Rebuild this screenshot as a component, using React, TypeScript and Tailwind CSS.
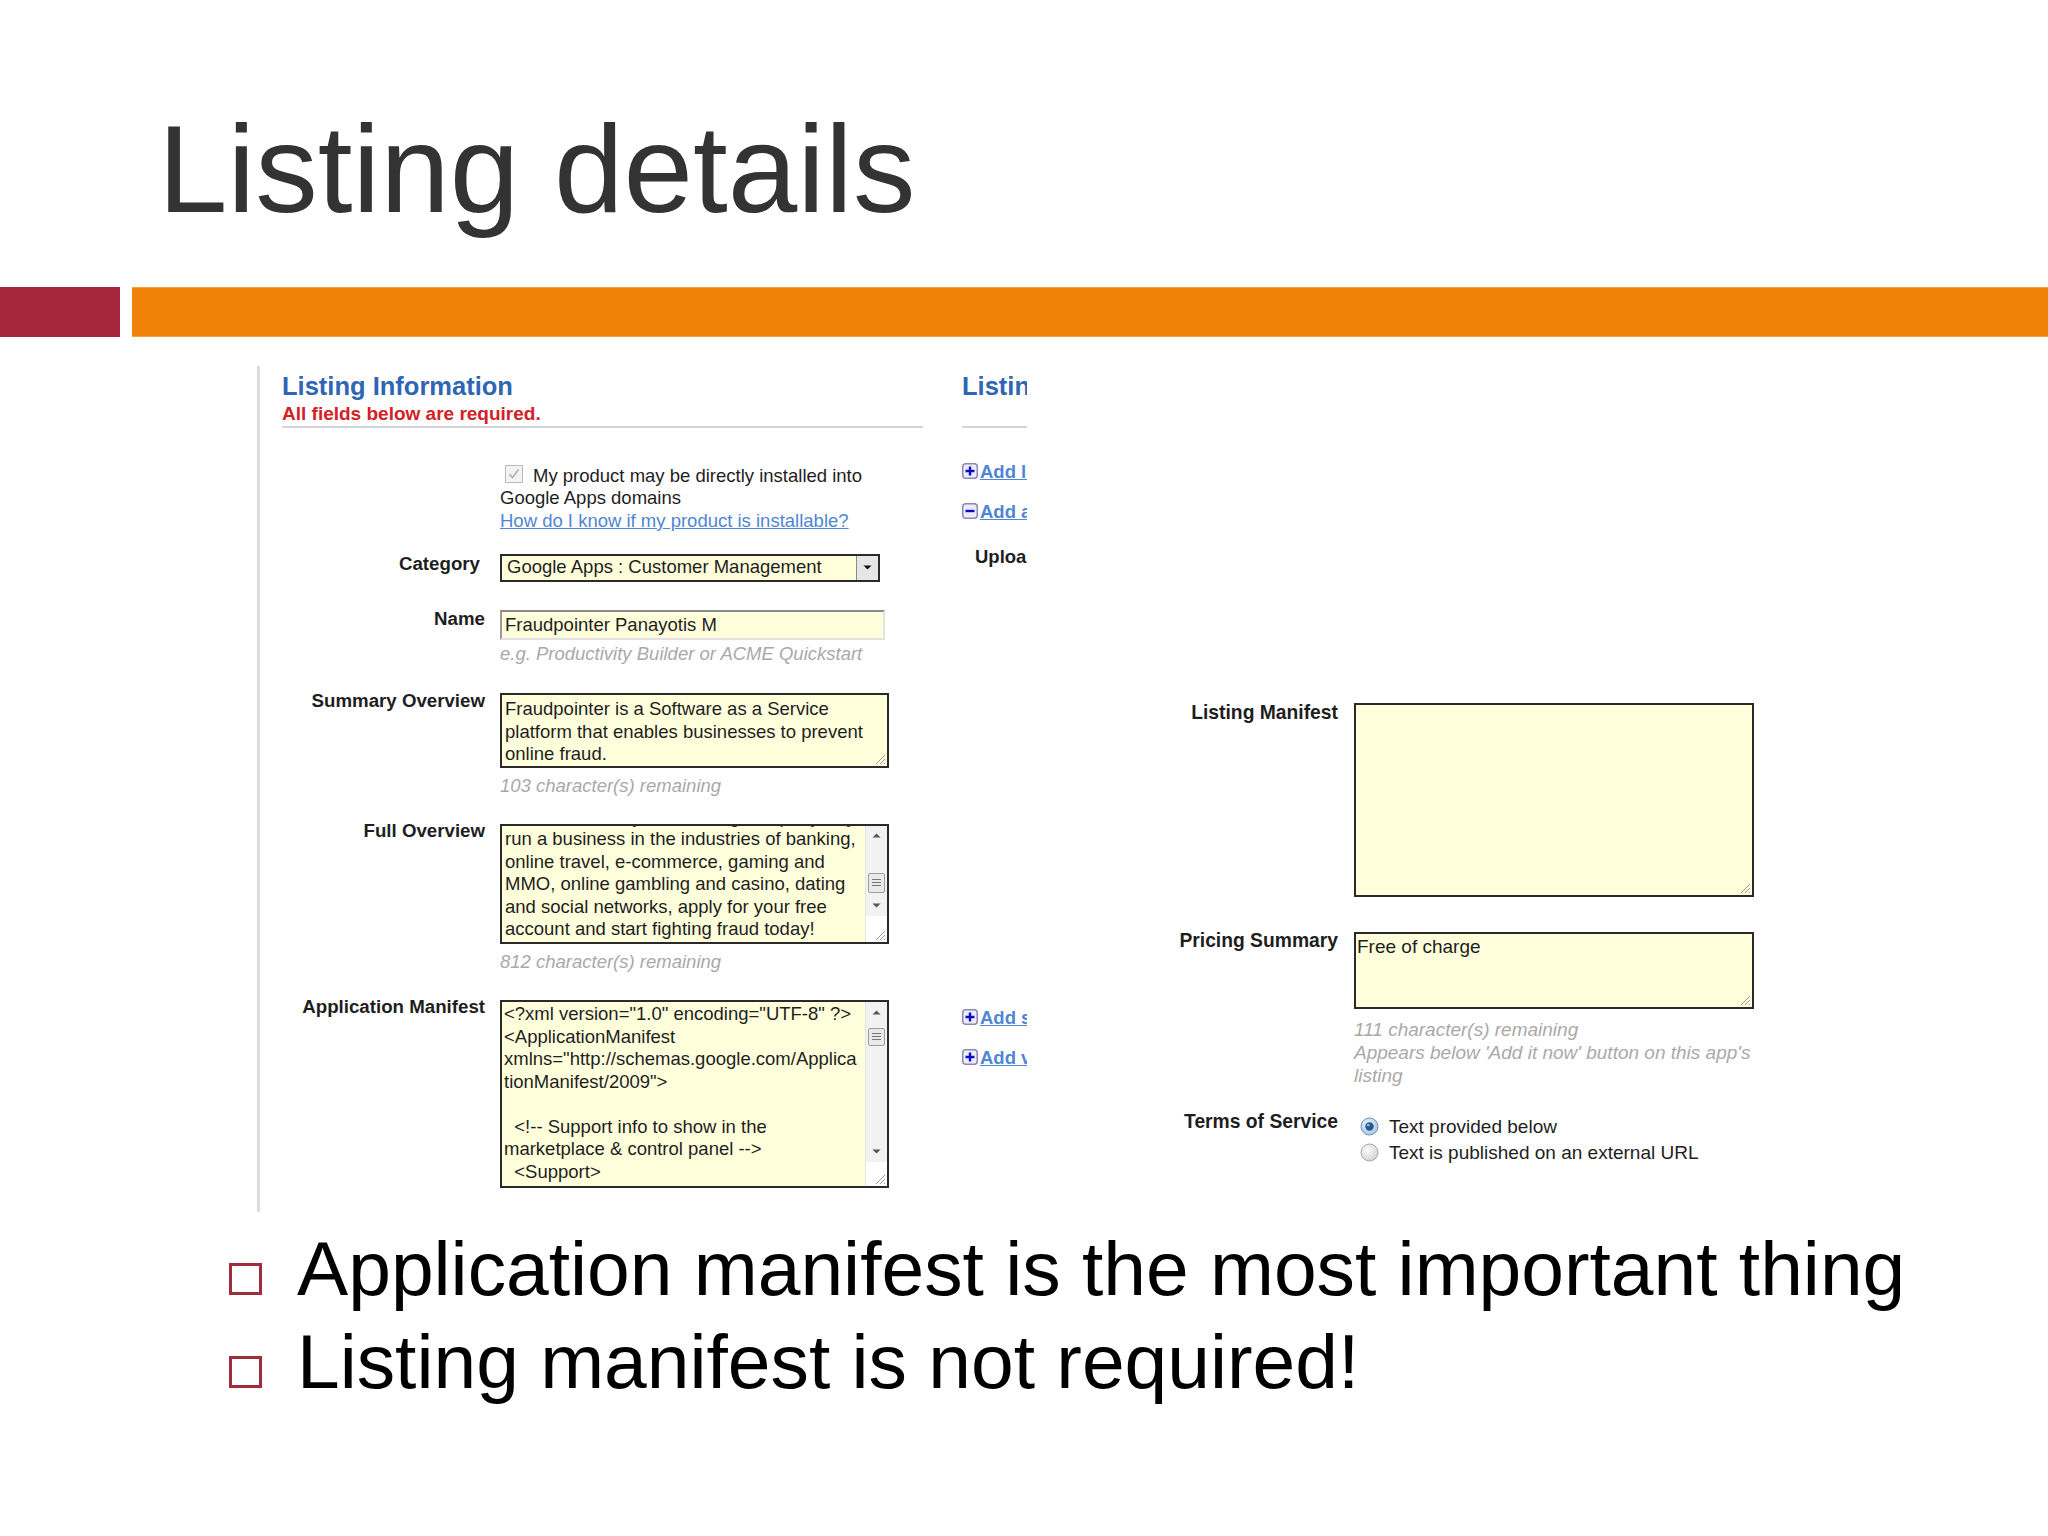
import React from "react";

const LINK = "text-[#4f86d4]";

function Grip() {
  return (
    <svg className="absolute bottom-[1px] right-[1px]" width="12" height="12" viewBox="0 0 12 12">
      <path d="M11 2L2 11M11 6L6 11M11 10L10 11" stroke="#9a9a9a" strokeWidth="1" />
    </svg>
  );
}

function Arrow({ up }: { up?: boolean }) {
  return (
    <svg width="9" height="5" viewBox="0 0 9 5">
      <path d={up ? "M0.5 4.5L4.5 0.5L8.5 4.5Z" : "M0.5 0.5L4.5 4.5L8.5 0.5Z"} fill="#555" />
    </svg>
  );
}

function Scrollbar({ upH, gap1, thumbH, gap2, downH, cornerH }: { upH: number; gap1: number; thumbH: number; gap2: number; downH: number; cornerH: number }) {
  return (
    <div className="flex w-[22px] shrink-0 flex-col border-l border-[#e4e4e4]">
      <div className="flex items-center justify-center bg-[#f2f2f2]" style={{ height: upH }}>
        <Arrow up />
      </div>
      <div className="bg-[#f2f2f2]" style={{ height: gap1 }} />
      <div className="flex items-center justify-center bg-[#f2f2f2] px-[2px]" style={{ height: thumbH }}>
        <div className="flex h-full w-full flex-col items-center justify-center gap-[2px] rounded-[2px] border border-[#9c9c9c] bg-[#e9e9e9]">
          <div className="h-[1px] w-[9px] bg-[#777]" />
          <div className="h-[1px] w-[9px] bg-[#777]" />
          <div className="h-[1px] w-[9px] bg-[#777]" />
        </div>
      </div>
      <div className="bg-[#f2f2f2]" style={{ height: gap2 }} />
      <div className="flex items-center justify-center bg-[#f2f2f2]" style={{ height: downH }}>
        <Arrow />
      </div>
      <div className="bg-white" style={{ height: cornerH }} />
    </div>
  );
}

function Label({ children, wide, extra }: { children: React.ReactNode; wide?: boolean; extra?: string }) {
  return (
    <div
      className={`${wide ? "w-[170px] text-[19.3px]" : "w-[203px] text-[18.7px]"} shrink-0 whitespace-nowrap text-right font-bold leading-[22.5px] text-[#1e1e1e] ${extra ?? ""}`}
    >
      {children}
    </div>
  );
}

function Hint({ children, extra }: { children: React.ReactNode; extra?: string }) {
  return <div className={`text-[18.5px] italic leading-[22.5px] text-[#a9a9a9] ${extra ?? ""}`}>{children}</div>;
}

function BoxIcon({ plus }: { plus?: boolean }) {
  return (
    <svg className="mt-[2.5px] mr-[2px] shrink-0" width="16" height="16" viewBox="0 0 16 16">
      <rect x="0.75" y="0.75" width="14.5" height="14.5" rx="3" fill="#ececf8" stroke="#8b88b8" strokeWidth="1.5" />
      <path d={plus ? "M8 3.5v9M3.5 8h9" : "M3.5 8h9"} stroke="#0a0ac8" strokeWidth="2.4" />
    </svg>
  );
}

function AddLink({ plus, text, extra }: { plus?: boolean; text: string; extra?: string }) {
  return (
    <div className={`flex items-start text-[18.5px] font-bold leading-[22.5px] ${extra ?? ""}`}>
      <BoxIcon plus={plus} />
      <span className={`${LINK} underline`}>{text}</span>
    </div>
  );
}

function Radio({ on }: { on?: boolean }) {
  return (
    <svg className="mt-[3.5px] ml-[6px] mr-[10px] shrink-0" width="19" height="19" viewBox="0 0 19 19">
      <defs>
        <radialGradient id={on ? "rOn" : "rOff"} cx="40%" cy="35%" r="70%">
          <stop offset="0%" stopColor={on ? "#e9f3fb" : "#fbfbfb"} />
          <stop offset="100%" stopColor={on ? "#a9c4dd" : "#d2d2d2"} />
        </radialGradient>
      </defs>
      <circle cx="9.5" cy="9.5" r="8.5" fill={`url(#${on ? "rOn" : "rOff"})`} stroke={on ? "#6f8fb3" : "#a6a6a6"} />
      {on && <circle cx="9.5" cy="9.5" r="4.2" fill="#1f5c94" />}
      {on && <circle cx="8.3" cy="8.2" r="1.4" fill="#7fb2df" />}
    </svg>
  );
}

const fullLines = [
  "fraud. Whether you are a big company or you simply",
  "run a business in the industries of banking,",
  "online travel, e-commerce, gaming and",
  "MMO, online gambling and casino, dating",
  "and social networks, apply for your free",
  "account and start fighting fraud today!",
];

const manifestLines = [
  '<?xml version="1.0" encoding="UTF-8" ?>',
  "<ApplicationManifest",
  'xmlns="http://schemas.google.com/Applica',
  'tionManifest/2009">',
  " ",
  "  <!-- Support info to show in the",
  "marketplace & control panel -->",
  "  <Support>",
];

function LeftColumn() {
  return (
    <div className="w-[641px] shrink-0 pt-[6px] text-[18.5px] leading-[22.5px] text-[#1e1e1e]">
      <div className="border-b-2 border-[#d4d4d4] pb-[1px]">
        <div className="text-[25.5px] font-bold leading-[28px] text-[#2f66b3]">Listing Information</div>
        <div className="mt-[2.5px] text-[19px] font-bold text-[#d42027]">All fields below are required.</div>
      </div>

      <div className="ml-[218px] mt-[36.5px]">
        <div className="flex items-start">
          <svg className="ml-[5px] mr-[10px] shrink-0" width="18" height="18" viewBox="0 0 18 18">
            <rect x="0.5" y="0.5" width="17" height="17" fill="#f3f3f3" stroke="#bcbcbc" />
            <path d="M4.5 9.5L7.5 12.5L13.5 4.5" fill="none" stroke="#b3b3b3" strokeWidth="1.8" />
          </svg>
          <span>My product may be directly installed into</span>
        </div>
        <div>Google Apps domains</div>
        <div className={`${LINK} underline`}>How do I know if my product is installable?</div>
      </div>

      <div className="mt-[21px] flex">
        <Label extra="pr-[5px]">Category</Label>
        <div className="ml-[15px] mt-[0.5px] flex h-[28px] w-[380px] border-2 border-[#2a2a2a] bg-[#ffffdc]">
          <div className="flex flex-1 items-center whitespace-nowrap pl-[5px]">Google Apps : Customer Management</div>
          <div className="flex w-[22px] items-center justify-center border-l border-[#8a8a8a] bg-[#e6e6e6]">
            <svg width="9" height="5" viewBox="0 0 9 5">
              <path d="M0.5 0.5L4.5 4.5L8.5 0.5Z" fill="#111" />
            </svg>
          </div>
        </div>
      </div>

      <div className="mt-[26.5px] flex">
        <Label>Name</Label>
        <div className="ml-[15px]">
          <div className="mt-[1.5px] h-[30px] w-[385px] border-2 border-t-[#8a8a8a] border-l-[#9a9a9a] border-r-[#e2e2e2] border-b-[#e2e2e2] bg-[#ffffdc] pl-[3px] pt-[2.5px]">
            Fraudpointer Panayotis M
          </div>
          <Hint extra="mt-[3.5px]">e.g. Productivity Builder or ACME Quickstart</Hint>
        </div>
      </div>

      <div className="mt-[24.5px] flex">
        <Label>Summary Overview</Label>
        <div className="ml-[15px]">
          <div className="relative mt-[2.5px] h-[75px] w-[389px] border-2 border-[#2a2a2a] bg-[#ffffdc] pl-[3px] pt-[3.5px]">
            <div>Fraudpointer is a Software as a Service</div>
            <div>platform that enables businesses to prevent</div>
            <div>online fraud.</div>
            <Grip />
          </div>
          <Hint extra="mt-[7.5px]">103 character(s) remaining</Hint>
        </div>
      </div>

      <div className="mt-[22.5px] flex">
        <Label>Full Overview</Label>
        <div className="ml-[15px]">
          <div className="relative mt-[3.5px] flex h-[120px] w-[389px] border-2 border-[#2a2a2a] bg-[#ffffdc]">
            <div className="flex-1 overflow-hidden pl-[3px]">
              <div className="-mt-[20px] whitespace-nowrap">
                {fullLines.map((l) => (
                  <div key={l}>{l}</div>
                ))}
              </div>
            </div>
            <Scrollbar upH={20} gap1={27} thumbH={20} gap2={3} downH={20} cornerH={26} />
            <Grip />
          </div>
          <Hint extra="mt-[7.5px]">812 character(s) remaining</Hint>
        </div>
      </div>

      <div className="mt-[22.5px] flex">
        <Label>Application Manifest</Label>
        <div className="ml-[15px]">
          <div className="relative mt-[3.5px] flex h-[188px] w-[389px] border-2 border-[#2a2a2a] bg-[#ffffdc]">
            <div className="flex-1 overflow-hidden whitespace-pre pl-[2px] pt-[1.5px]">
              {manifestLines.map((l, i) => (
                <div key={i}>{l}</div>
              ))}
            </div>
            <Scrollbar upH={22} gap1={4} thumbH={18} gap2={95} downH={21} cornerH={24} />
            <Grip />
          </div>
        </div>
      </div>
    </div>
  );
}

function RightColumn() {
  return (
    <div className="ml-[39px] w-[65px] shrink-0 overflow-hidden whitespace-nowrap pt-[6px] text-[18.5px] leading-[22.5px]">
      <div className="border-b-2 border-[#d4d4d4] pb-[1px]">
        <div className="text-[25.5px] font-bold leading-[28px] text-[#2f66b3]">Listing Images</div>
        <div className="mt-[2.5px] h-[22.5px]" />
      </div>
      <AddLink plus text="Add logo image" extra="mt-[32.5px]" />
      <AddLink text="Add another image" extra="mt-[17.5px]" />
      <div className="mt-[22.5px] pl-[13px] font-bold text-[#1e1e1e]">Upload</div>
      <AddLink plus text="Add screenshot" extra="mt-[438.5px]" />
      <AddLink plus text="Add video" extra="mt-[17.5px]" />
    </div>
  );
}

function RightPiece() {
  return (
    <div className="ml-[141px] mt-[335.5px] flex flex-col text-[19px] leading-[22.5px] text-[#1e1e1e]">
      <div className="flex">
        <Label wide>Listing Manifest</Label>
        <div className="relative ml-[16px] mt-[1.5px] h-[194px] w-[400px] border-2 border-[#2a2a2a] bg-[#ffffdc]">
          <Grip />
        </div>
      </div>

      <div className="mt-[32.5px] flex">
        <Label wide>Pricing Summary</Label>
        <div className="ml-[16px] w-[400px]">
          <div className="relative mt-[2.5px] h-[77px] border-2 border-[#2a2a2a] bg-[#ffffdc] pl-[1px] pt-[1.5px]">
            Free of charge
            <Grip />
          </div>
          <div className="mt-[8.5px] whitespace-nowrap italic leading-[23px] text-[#a9a9a9]">
            111 character(s) remaining
            <br />
            Appears below 'Add it now' button on this app's
            <br />
            listing
          </div>
        </div>
      </div>

      <div className="mt-[24px] flex">
        <Label wide>Terms of Service</Label>
        <div className="ml-[16px] mt-[3.3px] whitespace-nowrap leading-[26px]">
          <div className="flex items-start">
            <Radio on />
            <span>Text provided below</span>
          </div>
          <div className="flex items-start">
            <Radio />
            <span>Text is published on an external URL</span>
          </div>
        </div>
      </div>
    </div>
  );
}

export default function App() {
  return (
    <div className="relative h-[1536px] w-[2048px] overflow-hidden bg-white font-['Liberation_Sans',Arial,sans-serif]">
      <h1 className="pl-[158px] pt-[106px] text-[125px] font-normal leading-[125px] text-[#333333]">Listing details</h1>

      <div className="mt-[56px] flex h-[50px] gap-[12px]">
        <div className="w-[120px] bg-[#a3263a]" />
        <div className="flex-1 border-y border-[#f5a040] bg-[#f0820a]" />
      </div>

      <div className="mt-[29px] flex h-[846px] items-start">
        <div className="ml-[257px] flex h-[846px] w-[770px] border-l-[3px] border-[#dcdcdc] pl-[22px]">
          <LeftColumn />
          <RightColumn />
        </div>
        <RightPiece />
      </div>

      <ul className="mt-[10px] pl-[229px] text-[76.75px] leading-[93px] text-black">
        {["Application manifest is the most important thing", "Listing manifest is not required!"].map((t) => (
          <li key={t} className="flex items-start">
            <div className="mt-[41px] h-[32px] w-[33px] shrink-0 border-[3px] border-[#a02c3c]" />
            <span className="ml-[35px] whitespace-nowrap">{t}</span>
          </li>
        ))}
      </ul>
    </div>
  );
}
